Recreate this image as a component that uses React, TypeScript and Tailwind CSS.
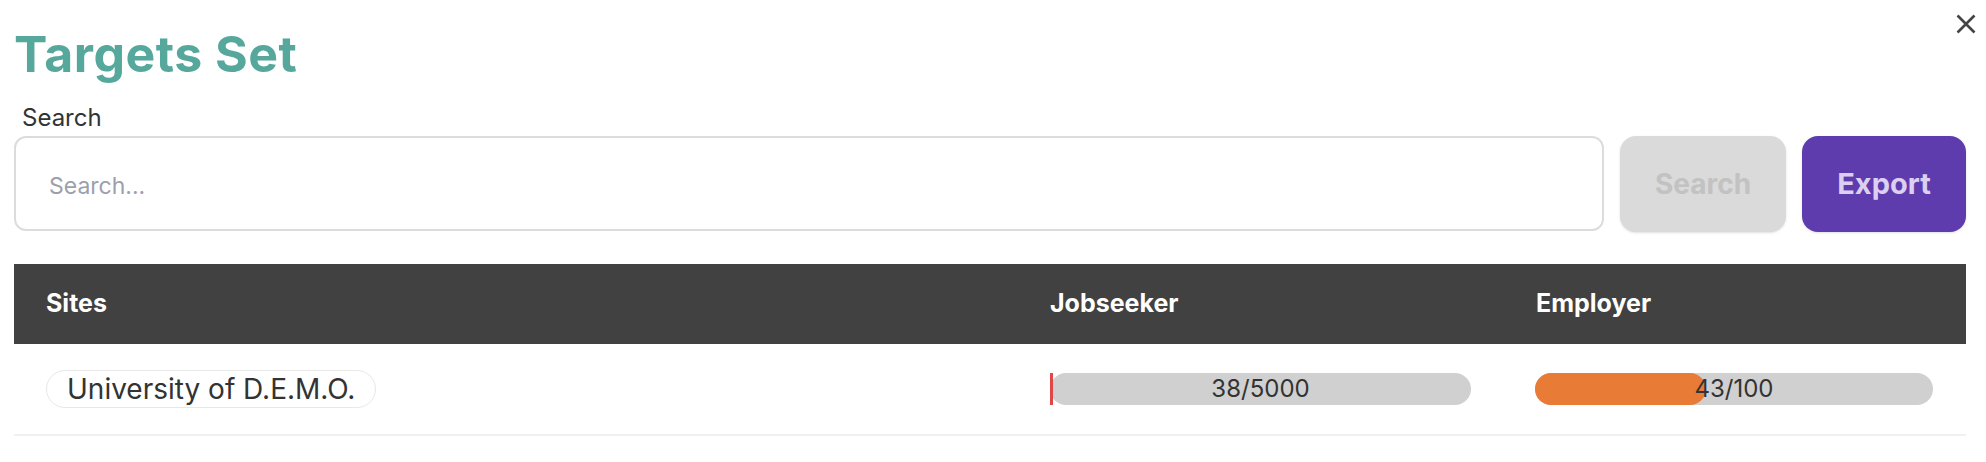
const rows = [
  { site: "University of D.E.M.O.", jobseeker: [38, 5000], employer: [43, 100] },
];

function Progress({ value, max, color }: { value: number; max: number; color: string }) {
  const pct = Math.min(100, (value / max) * 100);
  return (
    <div className="relative h-[32px] w-full rounded-full bg-[#d0d0d0]">
      <div className={`absolute inset-y-0 left-0 ${color}`} style={{ width: `max(3px, ${pct}%)` }} />
      <div className="relative flex h-full items-center justify-center text-[24px] text-[#333]">
        {value}/{max}
      </div>
    </div>
  );
}

export default function App() {
  return (
    <div className="relative min-h-screen bg-white pl-[14px] pr-[20px] pt-[26px] font-['Inter',sans-serif]">
      <button className="absolute right-[10px] top-[14px] text-[#444]">
        <svg width="20" height="20" viewBox="0 0 20 20" fill="none" stroke="currentColor" strokeWidth="2.6">
          <path d="M1.5 1.5l17 17M18.5 1.5l-17 17" />
        </svg>
      </button>
      <h1 className="text-[50px] font-bold leading-[56px] tracking-[0.5px] text-[#55a89b]">Targets Set</h1>
      <label className="mt-[23px] block pl-[8px] text-[24px] leading-[26px] text-[#333]">Search</label>
      <div className="mt-[5px] flex items-start gap-[16px]">
        <input
          placeholder="Search..."
          className="h-[95px] flex-1 rounded-[12px] border-2 border-[#dcdcdc] px-[33px] pt-[4px] text-[23px] outline-none placeholder:text-[#9ca0ad]"
        />
        <button className="h-[96px] w-[166px] rounded-[16px] bg-[#dadada] text-[28px] font-bold text-[#c2c2c2] shadow-sm">
          Search
        </button>
        <button className="h-[96px] w-[164px] rounded-[16px] bg-[#5f3cad] text-[29px] font-bold text-[#dcd0f2] shadow-sm">
          Export
        </button>
      </div>
      <div className="mt-[32px]">
        <div className="grid h-[80px] grid-cols-[1003px_487px_1fr] items-center bg-[#414141] text-[25px] font-bold text-white">
          <div className="pl-[32px]">Sites</div>
          <div className="pl-[33px]">Jobseeker</div>
          <div className="pl-[32px]">Employer</div>
        </div>
        {rows.map((r) => (
          <div
            key={r.site}
            className="grid h-[92px] grid-cols-[1003px_487px_1fr] items-center border-b-2 border-[#f0f0f0]"
          >
            <div className="pl-[32px]">
              <span className="inline-block rounded-full border border-[#e8e8e8] px-[20px] py-[2px] text-[28px] leading-[32px] text-[#333]">
                {r.site}
              </span>
            </div>
            <div className="pl-[33px] pr-[33px]">
              <Progress value={r.jobseeker[0]} max={r.jobseeker[1]} color="bg-[#e04848]" />
            </div>
            <div className="pl-[31px] pr-[33px]">
              <Progress value={r.employer[0]} max={r.employer[1]} color="bg-[#e87c36] rounded-full" />
            </div>
          </div>
        ))}
      </div>
    </div>
  );
}
